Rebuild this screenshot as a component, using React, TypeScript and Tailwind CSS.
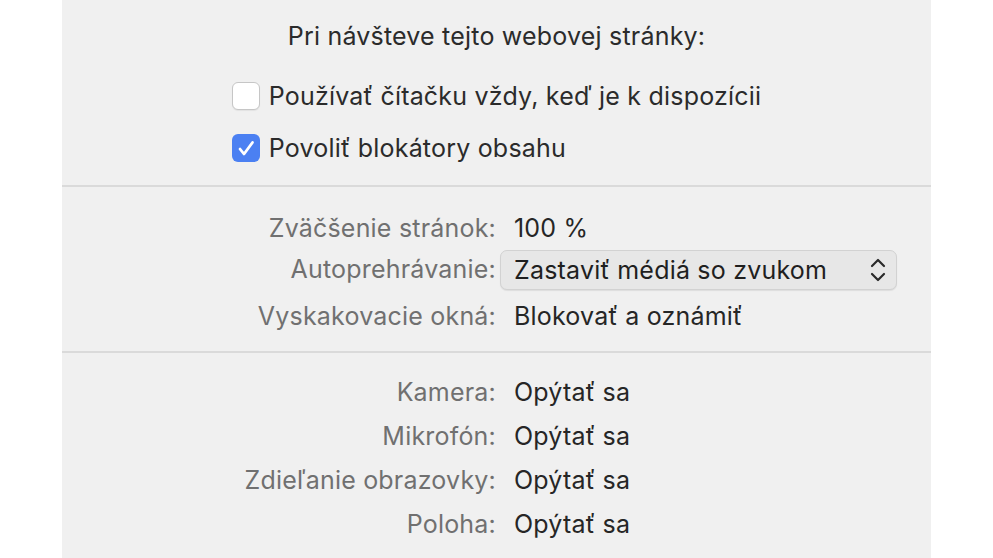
import React from 'react';

const font = { fontFamily: 'Inter, "Noto Sans", sans-serif', letterSpacing: '0.2px' };

function Row({ label, children, className = '' }: { label: string; children: React.ReactNode; className?: string }) {
  return (
    <div className={`flex items-center ${className}`}>
      <div className="w-[452px] shrink-0 text-right text-[#707070] pr-[18px]">{label}</div>
      <div className="flex-1 text-[#262626]">{children}</div>
    </div>
  );
}

function Checkbox({ checked }: { checked: boolean }) {
  if (checked) {
    return (
      <div className="w-[28px] h-[28px] shrink-0 rounded-[6px] bg-[#4b80f2] flex items-center justify-center">
        <svg width="28" height="28" viewBox="0 0 28 28" fill="none">
          <path d="M8 15 L12 20 L20.5 8.5" stroke="white" strokeWidth="2.8" strokeLinecap="round" strokeLinejoin="round" />
        </svg>
      </div>
    );
  }
  return <div className="w-[28px] h-[28px] shrink-0 rounded-[6px] bg-white border border-[#c6c6c6] shadow-[0_1px_1px_rgba(0,0,0,0.06)]" />;
}

export default function App() {
  return (
    <div className="w-full h-[558px] bg-white overflow-hidden text-[25px]" style={font}>
      <div className="mx-auto w-[869px] h-full bg-[#f0f0f0]">
        <section className="pt-[15px] pb-[15px] flex flex-col items-center">
          <div className="h-[44px] flex items-center text-[#2b2b2b]">Pri návšteve tejto webovej stránky:</div>
          <div className="mt-[15px] flex flex-col items-start gap-[8px]">
            <label className="h-[44px] flex items-center gap-[9px] text-[#2b2b2b]">
              <Checkbox checked={false} />
              <span className="pt-[1px]">Používať čítačku vždy, keď je k dispozícii</span>
            </label>
            <label className="h-[44px] flex items-center gap-[9px] text-[#2b2b2b]">
              <Checkbox checked />
              <span className="pt-[1px]">Povoliť blokátory obsahu</span>
            </label>
          </div>
        </section>
        <div className="h-[2px] bg-[#dadada]" />
        <section className="pt-[22px] pb-[14px]">
          <Row label="Zväčšenie stránok:" className="h-[40px]">100 %</Row>
          <div className="mt-[1px] flex items-center h-[40px]">
            <div className="w-[438px] shrink-0 text-right text-[#707070] pr-[4px]">Autoprehrávanie:</div>
            <div className="w-[397px] h-[40px] rounded-[7px] bg-[#e7e7e7] border border-[#d2d2d2] shadow-[0_1px_1px_rgba(0,0,0,0.08)] flex items-center justify-between pl-[13px] pr-[9px] text-[#1f1f1f]">
              <span className="pt-[2px]">Zastaviť médiá so zvukom</span>
              <svg width="18" height="28" viewBox="0 0 18 28" fill="none">
                <path d="M3 10 L9 4 L15 10" stroke="#2a2a2a" strokeWidth="2.2" strokeLinecap="round" strokeLinejoin="round" />
                <path d="M3 18 L9 24 L15 18" stroke="#2a2a2a" strokeWidth="2.2" strokeLinecap="round" strokeLinejoin="round" />
              </svg>
            </div>
          </div>
          <Row label="Vyskakovacie okná:" className="mt-[7px] h-[40px]">Blokovať a oznámiť</Row>
        </section>
        <div className="h-[2px] bg-[#dadada]" />
        <section className="pt-[18px]">
          <Row label="Kamera:" className="h-[44px]">Opýtať sa</Row>
          <Row label="Mikrofón:" className="h-[44px]">Opýtať sa</Row>
          <Row label="Zdieľanie obrazovky:" className="h-[44px]">Opýtať sa</Row>
          <Row label="Poloha:" className="h-[44px]">Opýtať sa</Row>
        </section>
      </div>
    </div>
  );
}
